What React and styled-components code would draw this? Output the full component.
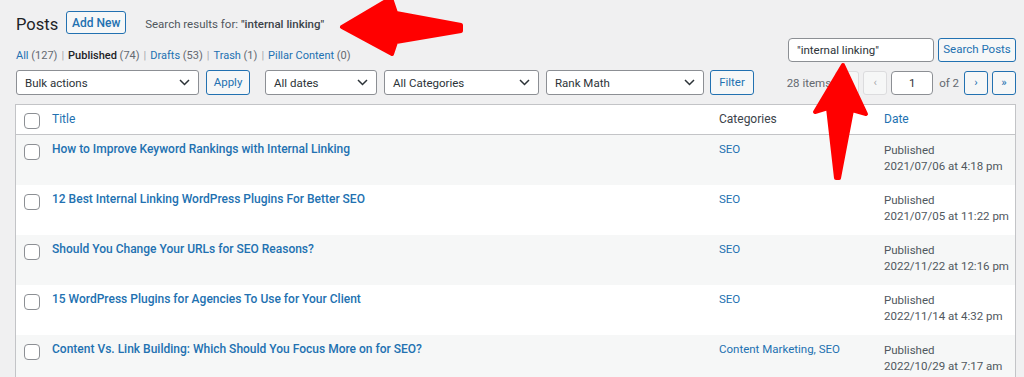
import React from 'react';
import styled, { createGlobalStyle } from 'styled-components';

const GlobalStyle = createGlobalStyle`
  html, body {
    margin: 0;
    padding: 0;
    background: #f0f0f1;
  }
  body {
    font-family: Roboto, 'Liberation Sans', sans-serif;
    font-size: 11.5px;
    color: #3c434a;
  }
`;

const Page = styled.div`
  position: relative;
  width: 1024px;
  height: 377px;
  overflow: hidden;
  padding: 0 8px 0 16px;
  box-sizing: border-box;
`;

const Header = styled.div`
  display: flex;
  align-items: center;
  padding-top: 11px;
  height: 23px;
`;

const Heading = styled.h1`
  margin: 3px 0 0;
  font-size: 16.5px;
  font-weight: 400;
  line-height: 23px;
  color: #1d2327;
`;

const Button = styled.button`
  font-family: inherit;
  font-size: ${p => p.size || 11.5}px;
  font-weight: ${p => p.bold ? 500 : 400};
  height: ${p => p.h || 25}px;
  width: ${p => p.w ? p.w + 'px' : 'auto'};
  padding: 0 ${p => p.pad ?? 4}px;
  margin-left: ${p => p.ml || 0}px;
  border: 1px solid ${p => p.disabled ? '#dcdcde' : '#2271b1'};
  color: ${p => p.disabled ? '#a7aaad' : '#2271b1'};
  background: #f6f7f7;
  border-radius: 3px;
  box-sizing: border-box;
  display: inline-flex;
  align-items: center;
  justify-content: center;
  white-space: nowrap;
  line-height: 1;
`;

const Subtitle = styled.span`
  margin: 2px 0 0 19px;
  font-size: 11.5px;
  color: #50575e;
  strong {
    color: #3c434a;
    font-weight: 500;
  }
`;

const TopRow = styled.div`
  display: flex;
  justify-content: space-between;
  align-items: flex-end;
  margin-top: 4px;
`;

const Views = styled.ul`
  margin: 0 0 -2px;
  padding: 0;
  list-style: none;
  display: flex;
  font-size: 11px;
  line-height: 16px;
  color: #646970;
  li { margin-right: 4px; }
  a { color: #2271b1; text-decoration: none; }
  b { color: #1d2327; font-weight: 500; }
`;

const Sep = styled.span`
  color: #a7aaad;
  margin-left: 4px;
`;

const SearchBox = styled.div`
  display: flex;
  gap: 4px;
`;

const TextInput = styled.div`
  width: ${p => p.w}px;
  height: ${p => p.h || 24}px;
  box-sizing: border-box;
  border: 1px solid #8c8f94;
  border-radius: 4px;
  background: #fff;
  color: #2c3338;
  font-size: 11.5px;
  display: flex;
  align-items: center;
  justify-content: ${p => p.center ? 'center' : 'flex-start'};
  padding: 0 8px;
`;

const Tablenav = styled.div`
  display: flex;
  justify-content: space-between;
  align-items: center;
  margin-top: 8px;
  height: 25px;
`;

const Actions = styled.div`
  display: flex;
  align-items: center;
`;

const SelectBox = styled.div`
  width: ${p => p.w}px;
  height: 25px;
  margin-left: ${p => p.ml || 0}px;
  box-sizing: border-box;
  border: 1px solid #8c8f94;
  border-radius: 3px;
  background: #fff;
  color: #2c3338;
  font-size: 11.5px;
  display: flex;
  align-items: center;
  justify-content: space-between;
  padding: 0 8px;
`;

const Pager = styled.div`
  display: flex;
  align-items: center;
  gap: 4px;
  color: #646970;
  font-size: 11.5px;
`;

const Count = styled.span`
  margin-right: 0;
`;

const Of = styled.span`
  margin: 0 1px 0 2px;
`;

const Table = styled.div`
  margin: 9px 0 0 -1px;
  border: 1px solid #c3c4c7;
  background: #fff;
`;

const Row = styled.div`
  display: grid;
  grid-template-columns: 28px 667px 165px 1fr;
  height: ${p => p.head ? 29 : 50}px;
  background: ${p => p.alt ? '#f6f7f7' : '#fff'};
  border-bottom: ${p => p.head ? '1px solid #c3c4c7' : 'none'};
`;

const Cell = styled.div`
  padding: ${p => p.head ? '6px' : '5px'} 8px 0;
  line-height: ${p => p.head ? '17px' : '19px'};
  color: ${p => p.muted ? '#50575e' : '#3c434a'};
  font-size: ${p => p.head ? 12 : 11.5}px;
  white-space: nowrap;
  a {
    color: #2271b1;
    text-decoration: none;
  }
`;

const CheckCell = styled.div`
  padding: ${p => p.head ? 8 : 9}px 0 0 8px;
`;

const Check = styled.span`
  display: block;
  width: 16px;
  height: 16px;
  box-sizing: border-box;
  border: 1px solid #8c8f94;
  border-radius: 4px;
  background: #fff;
`;

const PostTitle = styled.a`
  font-weight: 500;
  font-size: 12px;
`;

const DateText = styled.div`
  line-height: 16px;
  padding-top: 2px;
`;

const Overlay = styled.svg`
  position: absolute;
  left: 0;
  top: 0;
  pointer-events: none;
`;

const Chevron = () => (
  <svg width="11" height="7" viewBox="0 0 11 7">
    <path d="M1 1l4.5 4.5L10 1" fill="none" stroke="#2c3338" strokeWidth="1.5" />
  </svg>
);

const posts = [
  { title: 'How to Improve Keyword Rankings with Internal Linking', cat: 'SEO', date: '2021/07/06 at 4:18 pm' },
  { title: '12 Best Internal Linking WordPress Plugins For Better SEO', cat: 'SEO', date: '2021/07/05 at 11:22 pm' },
  { title: 'Should You Change Your URLs for SEO Reasons?', cat: 'SEO', date: '2022/11/22 at 12:16 pm' },
  { title: '15 WordPress Plugins for Agencies To Use for Your Client', cat: 'SEO', date: '2022/11/14 at 4:32 pm' },
  { title: 'Content Vs. Link Building: Which Should You Focus More on for SEO?', cat: 'Content Marketing, SEO', date: '2022/10/29 at 7:17 am' },
];

const selects = [
  { label: 'All dates', w: 112, ml: 15 },
  { label: 'All Categories', w: 155, ml: 7 },
  { label: 'Rank Math', w: 158, ml: 7 },
];

export default function App() {
  return (
    <Page>
      <GlobalStyle />
      <Header>
        <Heading>Posts</Heading>
        <Button bold h={23} w={60} ml={8} size={12}>Add New</Button>
        <Subtitle>Search results for: <strong>"internal linking"</strong></Subtitle>
      </Header>

      <TopRow>
        <Views>
          <li><a>All</a> (127)<Sep>|</Sep></li>
          <li><b>Published</b> (74)<Sep>|</Sep></li>
          <li><a>Drafts</a> (53)<Sep>|</Sep></li>
          <li><a>Trash</a> (1)<Sep>|</Sep></li>
          <li><a>Pillar Content</a> (0)</li>
        </Views>
        <SearchBox>
          <TextInput w={146}>"internal linking"</TextInput>
          <Button h={24} w={78}>Search Posts</Button>
        </SearchBox>
      </TopRow>

      <Tablenav>
        <Actions>
          <SelectBox w={183}>Bulk actions<Chevron /></SelectBox>
          <Button w={44} ml={7}>Apply</Button>
          {selects.map(s => (
            <SelectBox key={s.label} w={s.w} ml={s.ml}>{s.label}<Chevron /></SelectBox>
          ))}
          <Button w={44} ml={6}>Filter</Button>
        </Actions>
        <Pager>
          <Count>28 items</Count>
          <Button disabled w={24} h={24} pad={0}>«</Button>
          <Button disabled w={24} h={24} pad={0}>‹</Button>
          <TextInput w={42} center>1</TextInput>
          <Of>of 2</Of>
          <Button w={24} h={24} pad={0}>›</Button>
          <Button w={24} h={24} pad={0}>»</Button>
        </Pager>
      </Tablenav>

      <Table>
        <Row head>
          <CheckCell head><Check /></CheckCell>
          <Cell head><a>Title</a></Cell>
          <Cell head>Categories</Cell>
          <Cell head><a>Date</a></Cell>
        </Row>
        {posts.map((p, i) => (
          <Row key={p.title} alt={i % 2 === 0}>
            <CheckCell><Check /></CheckCell>
            <Cell><PostTitle>{p.title}</PostTitle></Cell>
            <Cell><a>{p.cat}</a></Cell>
            <Cell muted>
              <DateText>Published<br />{p.date}</DateText>
            </Cell>
          </Row>
        ))}
      </Table>

      <Overlay width="1024" height="377" viewBox="0 0 1024 377">
        <g fill="#ff0000" stroke="#ff0000" strokeWidth="4" strokeLinejoin="round">
          <path d="M342 27 L391 -2 L396 13 L461 25 L461 31 L396 42 L392 54 Z" />
          <path d="M843 65 L866 114 L852 110 L839 178 L836 178 L828 108 L815 112 Z" />
        </g>
      </Overlay>
    </Page>
  );
}
